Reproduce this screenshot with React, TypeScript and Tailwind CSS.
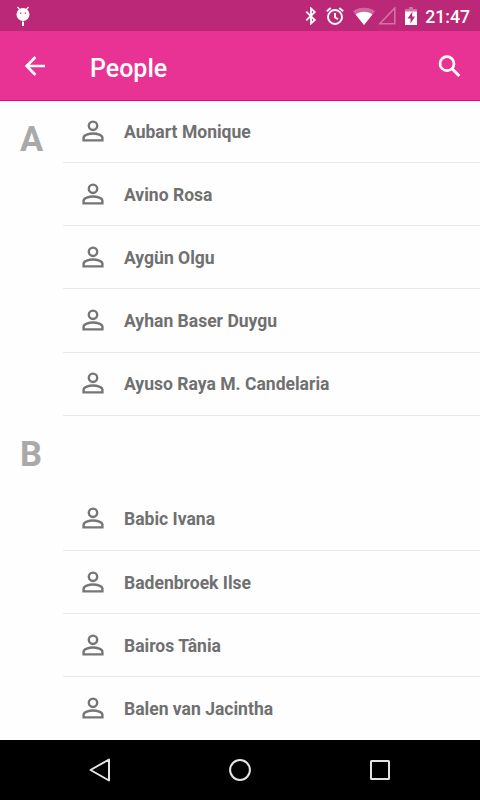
import { clsx } from "clsx"

const sections = [
  {
    letter: "A",
    people: ["Aubart Monique", "Avino Rosa", "Aygün Olgu", "Ayhan Baser Duygu", "Ayuso Raya M. Candelaria"],
  },
  {
    letter: "B",
    people: ["Babic Ivana", "Badenbroek Ilse", "Bairos Tânia", "Balen van Jacintha"],
  },
]

function PersonIcon() {
  return (
    <svg viewBox="0 0 22 22" className="-mt-px h-[22px] w-[22px] shrink-0" fill="none" stroke="#757575" strokeWidth="2.4">
      <circle cx="11" cy="5.8" r="4.2" />
      <path d="M1.6 20.4v-2.6c0-2.7 5.400-4.300 9.400-4.300s9.400 1.600 9.400 4.300v2.600z" />
    </svg>
  )
}

function StatusBar() {
  return (
    <div className="flex h-[31px] items-center bg-[#bb2877] pr-[10px] pl-[15.5px] text-white">
      {/* Debug notification */}
      <svg viewBox="0 0 14 20" className="h-5 w-[14px]" fill="#fff">
        <path d="m1.5 1 2.5 3M12.5 1 10 4" stroke="#fff" strokeWidth="1.2" />
        <circle cx="7" cy="8.5" r="6.5" />
        <path d="M6 15.5h2V20H6z" />
        <path d="M4 6.5h1.300v1.300H4zM8.700 6.5H10v1.300H8.700z" fill="#bb2877" />
      </svg>

      <div className="ml-auto flex items-center">
        <svg viewBox="0 0 12 18" className="mr-[9px] h-[18px] w-3" fill="none" stroke="#fff" strokeWidth="1.8">
          <path d="m1.3 4.700 8.500 8.300L6 16.600V1.400L9.800 5l-8.500 8.300" />
        </svg>
        <svg viewBox="0 0 18 18" className="mr-[9px] h-[18px] w-[18px]" fill="none" stroke="#fff" strokeWidth="1.9">
          <circle cx="9" cy="10" r="7" />
          <path d="M9 6v4.300l3 2M.8 4.300l3.900-3.200M17.200 4.300l-3.900-3.200" />
        </svg>
        <svg viewBox="0 0 22 18" className="mr-[3px] h-[18px] w-[22px]" fill="#fff">
          <path d="M11 18 0 4.200C6 -.4 16-.4 22 4.200z" opacity=".3" />
          <path d="M11 18 2.600 7.500c5-3.800 11.800-3.800 16.800 0z" />
        </svg>
        <svg viewBox="0 0 18 18" className="mr-[9px] h-[18px] w-[18px]" fill="none" stroke="#fff">
          <path d="M16.800 1v15.800H1.800z" strokeWidth="1.6" opacity=".35" />
        </svg>
        <svg viewBox="0 0 12 18" className="mr-[8px] h-[18px] w-3" fill="#fff">
          <path d="M4 0h4v2h4v3H0V2h4z" opacity=".35" />
          <path d="M0 4.500h12V18H0z" />
          <path d="M7.500 4.500 2.500 11.500h3v5l4.500-7H7z" fill="#bb2877" />
        </svg>
        <span className="mt-[2px] text-[17.6px] leading-5 font-medium">21:47</span>
      </div>
    </div>
  )
}

function Toolbar() {
  return (
    <header className="relative z-10 flex h-[70px] items-center border-b border-[#ec008c] bg-[#e83294] pr-[19px] pl-[25px] text-white">
      <svg viewBox="0 0 20 20" className="h-5 w-5" fill="none" stroke="#fff" strokeWidth="2.700">
        <path d="M20 10H2M10.500 1 1.700 10l8.800 9" />
      </svg>
      <h1 className="mt-[6px] ml-[45px] text-[25px] leading-8 font-medium">People</h1>
      <svg viewBox="0 0 23 23" className="mt-px ml-auto h-[23px] w-[23px]" fill="none" stroke="#fff">
        <circle cx="9" cy="8.700" r="7" strokeWidth="2.700" />
        <path d="m13.800 13.500 7.500 7.500" strokeWidth="3" />
      </svg>
    </header>
  )
}

function NavigationBar() {
  return (
    <nav className="relative z-10 flex h-[60px] shrink-0 items-center justify-between bg-black px-[88px]">
      <svg viewBox="0 0 24 24" className="h-6 w-6" fill="none" stroke="#e4e4e4" strokeWidth="2" strokeLinejoin="round">
        <path d="M21 1.500v21L2.500 12z" />
      </svg>
      <svg viewBox="0 0 24 24" className="h-6 w-6" fill="none" stroke="#e4e4e4" strokeWidth="2">
        <circle cx="12" cy="12" r="9.900" />
      </svg>
      <svg viewBox="0 0 24 24" className="h-6 w-6" fill="none" stroke="#e4e4e4" strokeWidth="2">
        <rect x="3" y="3" width="18" height="18" rx=".5" />
      </svg>
    </nav>
  )
}

export default function App() {
  return (
    <div className="flex h-[800px] w-[480px] flex-col overflow-hidden bg-white font-['Roboto',sans-serif]">
      <StatusBar />
      <Toolbar />

      <main className="-mt-[1.1px] min-h-0 flex-1 overflow-hidden bg-[#fefefe]">
        {sections.map((section, index) => (
          <section key={section.letter} className="flex">
            <h2
              className={clsx(
                "w-[62.5px] shrink-0 pl-5 text-[34.5px] leading-10 font-bold text-[#a9a9a9]",
                index === 0 ? "pt-[19px]" : "pt-[18px]",
              )}
            >
              {section.letter}
            </h2>
            <ul className={clsx("flex-1", index > 0 && "pt-[72px]")}>
              {section.people.map((person) => (
                <li key={person} className="flex h-[63.2px] items-center border-b border-[#e9e9e9] pl-[19.5px] text-[#707070]">
                  <PersonIcon />
                  <span className="mt-px ml-5 text-[17.55px] leading-6 font-bold">{person}</span>
                </li>
              ))}
            </ul>
          </section>
        ))}
      </main>

      <NavigationBar />
    </div>
  )
}
